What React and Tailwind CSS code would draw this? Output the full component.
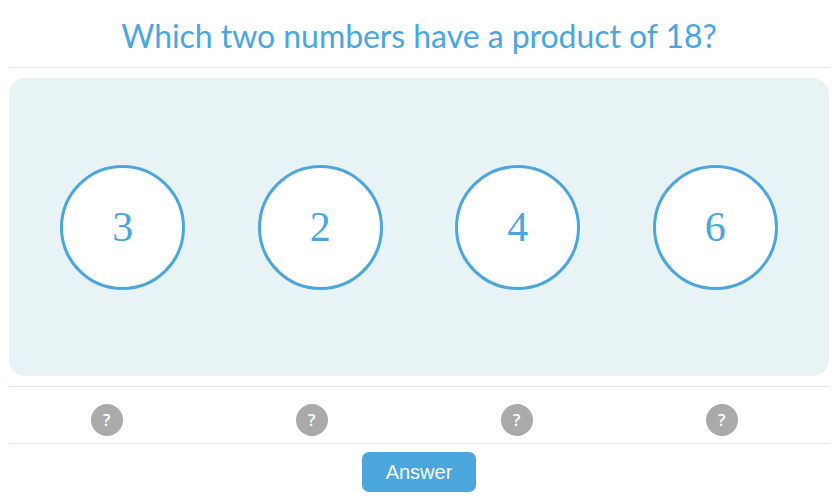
import React from 'react';

const numbers = [3, 2, 4, 6];

const App = () => {
  return (
    <div className="w-[840px] h-[501px] bg-white pl-[9px] pr-[11px]">
      <div className="h-[68px] pt-[5px] flex items-center justify-center border-b border-[#e3e3e3]">
        <h1 className="text-[32px] text-[#4aa6dc] font-['Lato',sans-serif] tracking-[-0.05px]">
          Which two numbers have a product of 18?
        </h1>
      </div>

      <div className="mt-[10px] h-[298px] rounded-[16px] bg-[#e8f3f6] px-[15px] flex items-center justify-around">
        {numbers.map((n) => (
          <button
            key={n}
            className="w-[125px] h-[125px] rounded-full bg-white border-[3px] border-[#4aa6dc] flex items-center justify-center text-[42px] text-[#4aa6dc] font-['Liberation_Serif',serif]"
          >
            {n}
          </button>
        ))}
      </div>

      <div className="mt-[10px] border-t border-b border-[#e3e3e3] h-[58px] pt-[17px]">
        <div className="grid grid-cols-4 w-[820px] ml-[-5px]">
          {numbers.map((n) => (
            <div key={n} className="flex justify-center">
              <div className="w-[32px] h-[32px] rounded-full bg-[#aaaaaa] flex items-center justify-center text-white text-[17px] font-semibold font-['Open_Sans',sans-serif]">
                ?
              </div>
            </div>
          ))}
        </div>
      </div>

      <div className="flex justify-center pt-[8px]">
        <button className="w-[114px] h-[40px] rounded-[7px] bg-[#4aa6dc] text-white text-[20px] font-['Liberation_Sans',sans-serif]">
          Answer
        </button>
      </div>
    </div>
  );
};

export default App;
